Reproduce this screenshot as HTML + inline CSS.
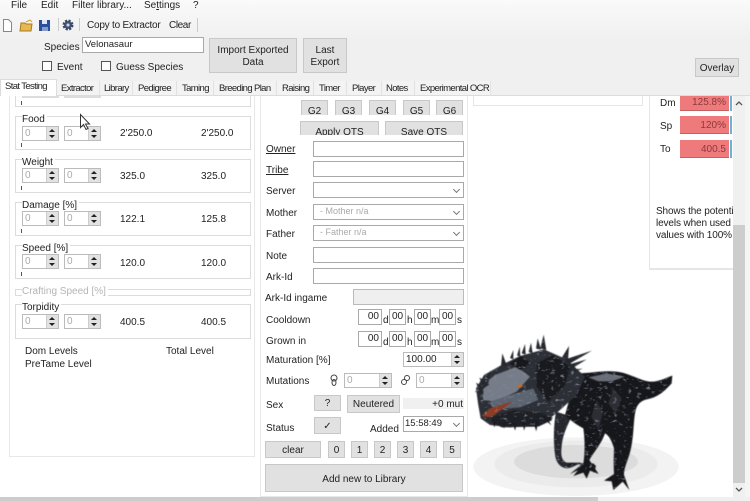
<!DOCTYPE html>
<html><head><meta charset="utf-8"><style>
html,body{margin:0;padding:0;width:750px;height:501px;overflow:hidden;background:#f0f0f0}
#r{position:absolute;left:0;top:0;width:750px;height:501px;overflow:hidden;font:10px/12px "Liberation Sans",sans-serif;color:#222;filter:blur(.35px);background:linear-gradient(#fafafa 0,#f6f6f6 14px,#f0f0f0 40px)}
#r div{position:absolute;box-sizing:border-box}
.t{white-space:nowrap;margin-top:1px}
.tb{font-size:9.500px;letter-spacing:-.63px}
.b{background:#e1e1e1;border:1px solid #c8c8c8;text-align:center;white-space:nowrap;overflow:hidden;padding-top:1px}
.i{background:#fff;border:1px solid #a9a9a9;padding-top:1px}
.g{border:1px solid #dcdcdc;background:#fff}
.sp{background:#fff;border:1px solid #bbb;color:#aaa;height:15px;padding-left:2px;line-height:13px}
.sp i{position:absolute;right:0;top:0;bottom:0;width:11px;background:#e2e2e2;border-left:1px solid #ccc}
.sp i:before{content:"";position:absolute;left:2px;top:2px;border:3px solid transparent;border-top:0;border-bottom:3px solid #222}
.sp i:after{content:"";position:absolute;left:2px;bottom:2px;border:3px solid transparent;border-bottom:0;border-top:3px solid #222}
.tick{width:1px;height:4px;background:#555}
.tab{height:14px;border-right:1px solid #e2e2e2;background:#f3f3f3;top:81px}
.sel:after{content:"";position:absolute;right:4px;top:4px;width:4px;height:4px;border:solid #777;border-width:0 1px 1px 0;transform:rotate(45deg)}
.bar{background:#ef7a7c;color:#8a3a3c;text-align:right;padding-right:3px;border-bottom:1px solid #c26265}
.cb{width:10px;height:10px;background:#fff;border:1px solid #555}
</style></head><body><div id="r">

<div class="t" style="left:11px;top:-1px">File</div><div class="t" style="left:41px;top:-1px">Edit</div><div class="t" style="left:72px;top:-1px">Filter library...</div><div class="t" style="left:144px;top:-1px">Se<u>t</u>tings</div><div class="t" style="left:193px;top:-1px">?</div>

<svg style="position:absolute;left:0;top:17px" width="80" height="16"><path d="M3.500 2.500h5l3 3v9h-8z" fill="#fff" stroke="#7a8a9a"/><path d="M21 6h4l1 1h6l-1 7H20z" fill="#e8b850" stroke="#a87a20"/><path d="M26 5l4-2 2 2" fill="none" stroke="#d8a030"/><rect x="39" y="3" width="11" height="11" fill="#2b4f9f"/><rect x="42" y="3" width="5" height="4" fill="#dfe6f5"/><rect x="42" y="10" width="6" height="4" fill="#8a9cc8"/><line x1="58.500" y1="1" x2="58.500" y2="14" stroke="#ccc"/><circle cx="68" cy="8" r="4" fill="#4a5a78" stroke="#3a4868" stroke-width="3" stroke-dasharray="2 1.200"/><circle cx="68" cy="8" r="1.500" fill="#cfd6e4"/><line x1="79.500" y1="1" x2="79.500" y2="14" stroke="#ccc"/></svg>
<div class="t" style="left:87px;top:19px;letter-spacing:-.22px">Copy to Extractor</div><div class="t" style="left:169px;top:19px;letter-spacing:-.4px">Clear</div><div style="left:197px;top:18px;width:1px;height:14px;background:#ccc"></div>

<div class="t" style="left:44px;top:41px">Species</div>
<div class="i" style="left:82px;top:37px;width:122px;height:16px;padding-left:2px;line-height:13px;font-size:9.500px;padding-top:0">Velonasaur</div>
<div class="cb" style="left:42px;top:61px"></div><div class="t" style="left:57px;top:61px">Event</div>
<div class="cb" style="left:101px;top:61px"></div><div class="t" style="left:116px;top:61px">Guess Species</div>
<div class="b" style="left:209px;top:38px;width:88px;height:35px;line-height:12px;padding-top:6px">Import Exported<br>Data</div>
<div class="b" style="left:303px;top:38px;width:44px;height:35px;line-height:12px;padding-top:6px">Last<br>Export</div>
<div class="b" style="left:695px;top:58px;width:44px;height:19px;line-height:17px">Overlay</div>

<div style="left:0;top:95px;width:750px;height:406px;background:#fff;border-top:1px solid #dcdcdc"></div>

<div class="tab" style="left:57px;width:43px"></div><div class="tab" style="left:100px;width:33px"></div><div class="tab" style="left:133px;width:44px"></div><div class="tab" style="left:177px;width:37px"></div><div class="tab" style="left:214px;width:63px"></div><div class="tab" style="left:277px;width:37px"></div><div class="tab" style="left:314px;width:33px"></div><div class="tab" style="left:347px;width:35px"></div><div class="tab" style="left:382px;width:33px"></div><div class="tab" style="left:415px;width:76px"></div>
<div style="left:0;top:79px;width:57px;height:17px;background:#fff;border:1px solid #dcdcdc;border-bottom:0"></div>
<div class="t tb" style="left:5px;top:80px">Stat Testing</div>
<div class="t tb" style="left:61px;top:82px">Extractor</div><div class="t tb" style="left:104px;top:82px">Library</div><div class="t tb" style="left:138px;top:82px">Pedigree</div><div class="t tb" style="left:182px;top:82px">Taming</div><div class="t tb" style="left:219px;top:82px">Breeding Plan</div><div class="t tb" style="left:282px;top:82px">Raising</div><div class="t tb" style="left:319px;top:82px">Timer</div><div class="t tb" style="left:352px;top:82px">Player</div><div class="t tb" style="left:386px;top:82px">Notes</div><div class="t tb" style="left:420px;top:82px">Experimental OCR</div>

<!-- left panel -->
<div style="left:9px;top:96px;width:246px;height:361px;border:1px solid #e8e8e8;border-top:0;background:#fff"></div>

<div class="g" style="left:15px;top:96px;width:236px;height:11px;border-top:0"></div>
<div style="left:22px;top:96px;width:37px;height:2px;background:#ddd"></div><div style="left:64px;top:96px;width:37px;height:2px;background:#ddd"></div><div class="tick" style="left:21px;top:101px"></div>

<div class="g" style="left:15px;top:116px;width:236px;height:34px"></div>
<div class="t" style="left:22px;top:113px;background:#fff;padding-right:2px">Food</div>
<div class="sp" style="left:22px;top:126px;width:37px">0<i></i></div><div class="sp" style="left:64px;top:126px;width:37px">0<i></i></div><div class="tick" style="left:21px;top:143px"></div>
<div class="t" style="left:120px;top:127px">2'250.0</div><div class="t" style="left:201px;top:127px">2'250.0</div>

<div class="g" style="left:15px;top:159px;width:236px;height:34px"></div>
<div class="t" style="left:22px;top:156px;background:#fff;padding-right:2px">Weight</div>
<div class="sp" style="left:22px;top:168px;width:37px">0<i></i></div><div class="sp" style="left:64px;top:168px;width:37px">0<i></i></div><div class="tick" style="left:21px;top:186px"></div>
<div class="t" style="left:120px;top:170px">325.0</div><div class="t" style="left:201px;top:170px">325.0</div>

<div class="g" style="left:15px;top:202px;width:236px;height:34px"></div>
<div class="t" style="left:22px;top:199px;background:#fff;padding-right:2px">Damage [%]</div>
<div class="sp" style="left:22px;top:211px;width:37px">0<i></i></div><div class="sp" style="left:64px;top:211px;width:37px">0<i></i></div><div class="tick" style="left:21px;top:229px"></div>
<div class="t" style="left:120px;top:213px">122.1</div><div class="t" style="left:201px;top:213px">125.8</div>

<div class="g" style="left:15px;top:245px;width:236px;height:34px"></div>
<div class="t" style="left:22px;top:242px;background:#fff;padding-right:2px">Speed [%]</div>
<div class="sp" style="left:22px;top:254px;width:37px">0<i></i></div><div class="sp" style="left:64px;top:254px;width:37px">0<i></i></div><div class="tick" style="left:21px;top:272px"></div>
<div class="t" style="left:120px;top:257px">120.0</div><div class="t" style="left:201px;top:257px">120.0</div>

<div class="g" style="left:15px;top:289px;width:236px;height:7px"></div>
<div class="t" style="left:22px;top:285px;background:#fff;padding-right:2px;color:#b5b5b5">Crafting Speed [%]</div>

<div class="g" style="left:15px;top:304px;width:236px;height:35px"></div>
<div class="t" style="left:22px;top:301px;background:#fff;padding-right:2px">Torpidity</div>
<div class="sp" style="left:22px;top:314px;width:37px">0<i></i></div><div class="sp" style="left:64px;top:314px;width:37px">0<i></i></div>
<div class="t" style="left:120px;top:316px">400.5</div><div class="t" style="left:201px;top:316px">400.5</div>

<div class="t" style="left:25px;top:345px">Dom Levels</div><div class="t" style="left:166px;top:345px">Total Level</div><div class="t" style="left:25px;top:358px">PreTame Level</div>

<svg style="position:absolute;left:79px;top:113px" width="14" height="18"><path d="M1.500 1.500v13l3-3 2.500 5 2-1-2.500-4.500h4z" fill="#fff" stroke="#333"/></svg>

<!-- middle panel -->
<div style="left:260px;top:96px;width:208px;height:401px;border:1px solid #e8e8e8;border-top:0;background:#fff"></div>
<div class="b" style="left:301px;top:100px;width:27px;height:15px;line-height:21px;border-bottom:0;padding-top:0">G2</div><div class="b" style="left:335px;top:100px;width:27px;height:15px;line-height:21px;border-bottom:0;padding-top:0">G3</div><div class="b" style="left:369px;top:100px;width:27px;height:15px;line-height:21px;border-bottom:0;padding-top:0">G4</div><div class="b" style="left:403px;top:100px;width:27px;height:15px;line-height:21px;border-bottom:0;padding-top:0">G5</div><div class="b" style="left:436px;top:100px;width:27px;height:15px;line-height:21px;border-bottom:0;padding-top:0">G6</div>
<div class="b" style="left:300px;top:121px;width:79px;height:14px;line-height:22px;border-bottom:0;padding-top:0">Apply OTS</div><div class="b" style="left:385px;top:121px;width:78px;height:14px;line-height:22px;border-bottom:0;padding-top:0">Save OTS</div>

<div class="t" style="left:266px;top:143px"><u>Owner</u></div><div class="i" style="left:313px;top:141px;width:151px;height:16px"></div>
<div class="t" style="left:266px;top:164px"><u>Tribe</u></div><div class="i" style="left:313px;top:161px;width:151px;height:16px"></div>
<div class="t" style="left:266px;top:185px">Server</div><div class="i sel" style="left:313px;top:182px;width:151px;height:16px"></div>
<div class="t" style="left:266px;top:207px">Mother</div><div class="i sel" style="left:313px;top:204px;width:151px;height:16px;color:#aaa;padding-left:6px;line-height:13px;font-size:9px;padding-top:0">- Mother n/a</div>
<div class="t" style="left:266px;top:228px">Father</div><div class="i sel" style="left:313px;top:225px;width:151px;height:16px;color:#aaa;padding-left:6px;line-height:13px;font-size:9px;padding-top:0">- Father n/a</div>
<div class="t" style="left:266px;top:250px">Note</div><div class="i" style="left:313px;top:247px;width:151px;height:16px"></div>
<div class="t" style="left:266px;top:271px">Ark-Id</div><div class="i" style="left:313px;top:268px;width:151px;height:16px"></div>
<div class="t" style="left:265px;top:292px">Ark-Id ingame</div><div style="left:353px;top:289px;width:111px;height:16px;background:#efefef;border:1px solid #bbb"></div>

<div class="t" style="left:266px;top:314px">Cooldown</div>
<div class="i" style="left:358px;top:309px;width:24px;height:16px;text-align:right;padding-right:2px">00</div><div class="t" style="left:383px;top:314px">d</div><div class="i" style="left:389px;top:309px;width:17px;height:16px;text-align:center">00</div><div class="t" style="left:407px;top:314px">h</div><div class="i" style="left:414px;top:309px;width:17px;height:16px;text-align:center">00</div><div class="t" style="left:431px;top:314px">m</div><div class="i" style="left:439px;top:309px;width:17px;height:16px;text-align:center">00</div><div class="t" style="left:457px;top:314px">s</div>
<div class="t" style="left:266px;top:335px">Grown in</div>
<div class="i" style="left:358px;top:331px;width:24px;height:16px;text-align:right;padding-right:2px">00</div><div class="t" style="left:383px;top:336px">d</div><div class="i" style="left:389px;top:331px;width:17px;height:16px;text-align:center">00</div><div class="t" style="left:407px;top:336px">h</div><div class="i" style="left:414px;top:331px;width:17px;height:16px;text-align:center">00</div><div class="t" style="left:431px;top:336px">m</div><div class="t" style="left:457px;top:336px">s</div><div class="i" style="left:439px;top:331px;width:17px;height:16px;text-align:center">00</div>

<div class="t" style="left:266px;top:354px">Maturation [%]</div><div class="sp" style="left:403px;top:352px;width:61px;color:#222">100.00<i></i></div>
<div class="t" style="left:266px;top:375px">Mutations</div>
<svg style="position:absolute;left:329px;top:374px" width="10" height="13"><ellipse cx="5" cy="4" rx="3" ry="3" fill="none" stroke="#444"/><ellipse cx="5" cy="8.500" rx="2" ry="3" fill="none" stroke="#444"/></svg>
<div class="sp" style="left:344px;top:373px;width:48px">0<i></i></div>
<svg style="position:absolute;left:400px;top:374px" width="11" height="13"><circle cx="7" cy="4" r="2.500" fill="none" stroke="#444"/><circle cx="4" cy="8" r="2.500" fill="none" stroke="#444"/></svg>
<div class="sp" style="left:416px;top:373px;width:48px">0<i></i></div>

<div class="t" style="left:266px;top:399px">Sex</div><div class="b" style="left:314px;top:395px;width:27px;height:16px;line-height:14px">?</div><div class="b" style="left:347px;top:395px;width:53px;height:18px;line-height:16px">Neutered</div>
<div style="left:403px;top:398px;width:61px;height:11px;background:#f0f0f0"></div><div class="t" style="right:287px;top:398px">+0 mut</div>
<div class="t" style="left:266px;top:422px">Status</div><div class="b" style="left:314px;top:417px;width:27px;height:17px;line-height:15px">✓</div><div class="t" style="left:370px;top:423px">Added</div>
<div class="i sel" style="left:403px;top:416px;width:61px;height:16px;padding-left:1px;line-height:12px;font-size:9.500px">15:58:49</div>

<div class="b" style="left:265px;top:441px;width:56px;height:17px;line-height:15px">clear</div><div class="b" style="left:328px;top:441px;width:17px;height:17px;line-height:15px">0</div><div class="b" style="left:351px;top:441px;width:17px;height:17px;line-height:15px">1</div><div class="b" style="left:374px;top:441px;width:17px;height:17px;line-height:15px">2</div><div class="b" style="left:397px;top:441px;width:17px;height:17px;line-height:15px">3</div><div class="b" style="left:420px;top:441px;width:17px;height:17px;line-height:15px">4</div><div class="b" style="left:443px;top:441px;width:18px;height:17px;line-height:15px">5</div>
<div class="b" style="left:265px;top:464px;width:198px;height:28px;line-height:27px">Add new to Library</div>

<!-- right -->
<div style="left:473px;top:96px;width:170px;height:10px;border:1px solid #e6e6e6;border-top:0"></div>
<div style="left:649px;top:96px;width:85px;height:174px;border:solid #e6e6e6;border-width:0 0 2px 1px"></div>
<div class="t" style="left:660px;top:97px">Dm</div><div class="bar" style="left:680px;top:96px;width:49px;height:15px;line-height:14px">125.8%</div>
<div class="t" style="left:660px;top:120px">Sp</div><div class="bar" style="left:680px;top:116px;width:49px;height:18px;line-height:19px">120%</div>
<div class="t" style="left:660px;top:143px">To</div><div class="bar" style="left:680px;top:140px;width:49px;height:18px;line-height:19px">400.5</div>
<div style="left:730px;top:96px;width:2px;height:15px;background:#6cb3d4"></div><div style="left:730px;top:116px;width:2px;height:18px;background:#6cb3d4"></div><div style="left:730px;top:140px;width:2px;height:18px;background:#6cb3d4"></div>
<div style="left:656px;top:206px;width:77px;height:36px;overflow:hidden;white-space:nowrap;background:#fff;letter-spacing:-.12px">Shows the potential<br>levels when used in<br>values with 100% TE</div>

<div style="left:733px;top:96px;width:12px;height:401px;background:#f0f0f0"></div>
<div style="left:733px;top:225px;width:12px;height:258px;background:#cdcdcd"></div>
<svg style="position:absolute;left:733px;top:96px" width="12" height="401"><path d="M3 9l3-3 3 3" fill="none" stroke="#555" stroke-width="1.300"/><path d="M3 392l3 3 3-3" fill="none" stroke="#555" stroke-width="1.300"/></svg>
<div style="left:745px;top:96px;width:5px;height:405px;background:#f5f5f5"></div>

<div style="left:0;top:497px;width:750px;height:4px;background:#f0f0f0"></div>
<div style="left:0;top:497px;width:598px;height:4px;background:#cdcdcd"></div>

<!-- creature -->
<svg style="position:absolute;left:470px;top:320px" width="263" height="177" viewBox="0 0 789 531">
<defs><filter id="f" x="-5%" y="-5%" width="110%" height="110%" color-interpolation-filters="sRGB">
<feGaussianBlur in="SourceGraphic" stdDeviation="1.300" result="b"/>
<feTurbulence type="fractalNoise" baseFrequency=".07 .11" numOctaves="2" seed="4" result="n"/>
<feColorMatrix in="n" type="matrix" values="0 0 0 0 .5 0 0 0 0 .53 0 0 0 0 .6 3 0 0 0 -1.750" result="s"/>
<feComposite in="s" in2="b" operator="in" result="sp"/>
<feMerge><feMergeNode in="b"/><feMergeNode in="sp"/></feMerge>
</filter></defs>
<ellipse cx="318" cy="440" rx="308" ry="88" fill="#f3f3f3"/>
<ellipse cx="318" cy="432" rx="245" ry="70" fill="#ebebeb"/>
<ellipse cx="318" cy="425" rx="186" ry="50" fill="#dcdcdc"/>
<g filter="url(#f)">
<path d="M258 275C250 320 250 370 256 410 262 440 285 452 310 440L335 428 290 428C272 420 272 400 276 370 280 340 295 310 305 290Z" fill="#26282e"/>
<path d="M300 430l-10 8 30-6 14 2-34 28 34-16 12 18 10-20 16 14 6-20-8-8 0 0z" fill="#17181c"/>
<path d="M320 160C360 160 400 150 440 155 480 160 510 182 540 185 570 186 590 172 607 167L605 190C590 205 575 225 540 236 520 240 505 245 497 270 490 300 492 340 484 380 476 420 462 440 462 465L478 510 458 485 446 496 430 510 425 484 402 482 432 462C430 430 432 400 432 385 425 360 415 345 405 340 395 370 372 395 358 420L386 462 360 452 350 476 340 458 310 468 340 430C345 400 345 360 340 325 320 315 300 300 285 285Z" fill="#16171b"/>
<path d="M355 172l55-12 55 10-40 14-40 0z" fill="#6a6e77"/>
<path d="M430 205l25 30-18 45-22-30zM380 240l18 40-12 50-22-40z" fill="#2c2e34"/>
<path d="M18 205L42 165 100 132 150 108 222 88 290 118 345 170 320 225 270 270 240 295 190 315 120 322 60 315 32 295 24 250Z" fill="#2c2f36"/>
<path d="M32 200L75 165 140 140 180 170 140 215 75 245 40 240Z" fill="#767d89"/>
<path d="M60 245L130 222 190 205 205 240 150 262 70 268Z" fill="#5c6471"/>
<path d="M200 130l50-25 50 35-15 55-50 50-35-45z" fill="#191a1e"/>
<path d="M118 130l35-22 28 20-30 22z" fill="#17181b"/>
<path d="M34 288L58 266 128 244 102 264 62 292Z" fill="#8f3c22"/>
<path d="M50 296L130 270 225 280 247 300 205 320 95 322Z" fill="#1e2025"/>
<ellipse cx="150" cy="198" rx="8" ry="5" fill="#cc6a20"/>
<path d="M221 44l8 46-18-5zM203 55l10 34-15-3zM183 68l5 32-12-4zM165 72l2 32-12-4zM149 80l2 30-10-3zM130 90l0 28-10-4zM97 100l14 38-18 0zM297 78l-3 42-18-8zM366 92l-72 42-8-16zM350 118l-52 32-6-15zM338 146l-42 16-6-12zM62 152l-22 32 15 6zM28 172l30 22-18 11zM18 188l26 16-15 11zM14 215l26-6 0 15z" fill="#25272c"/>
<path d="M68 305l5 17 6-17zM98 308l4 18 7-17zM128 308l7 24 6-22zM158 308l4 24 7-22zM188 302l11 32 5-30zM212 288l32 28-16-28zM225 286l25 8-20 8z" fill="#1a1b20"/>
</g>
</svg>

</div></body></html>
